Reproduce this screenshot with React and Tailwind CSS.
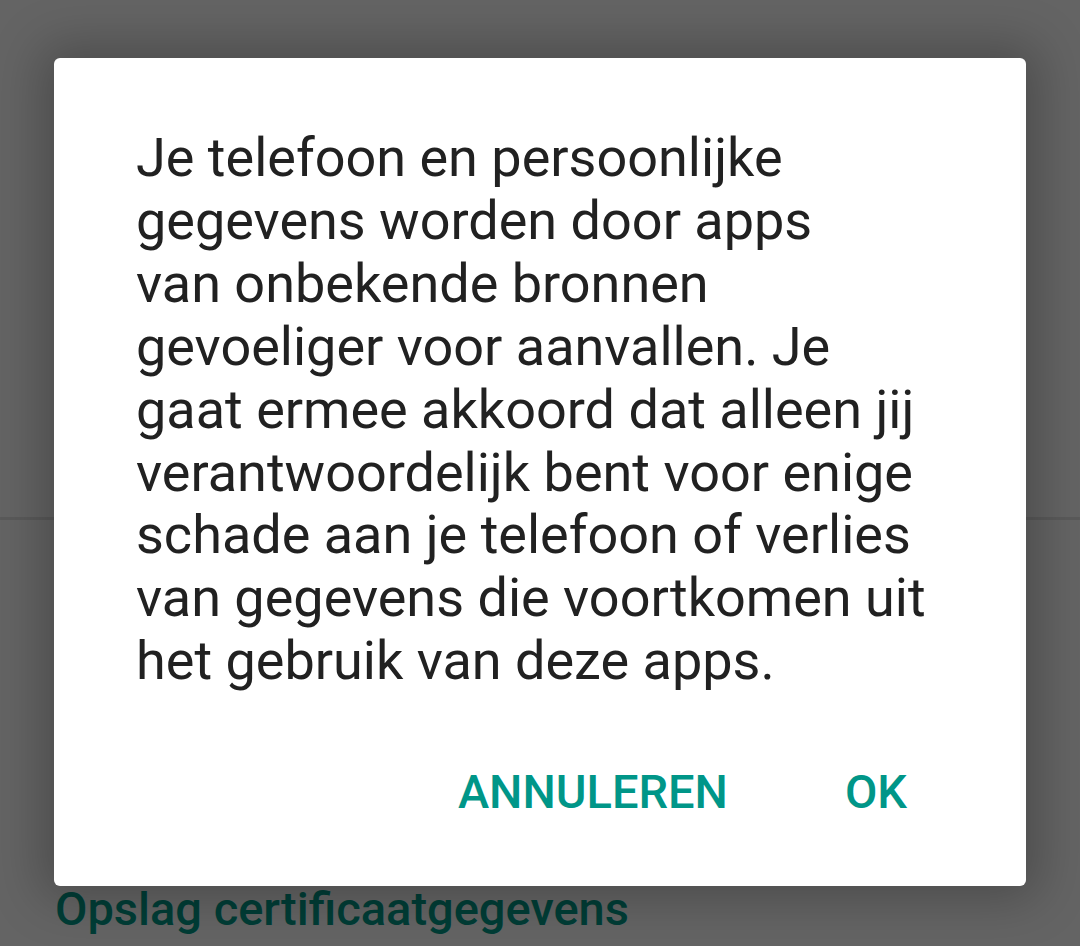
import React from "react";

const lines = [
  "Je telefoon en persoonlijke",
  "gegevens worden door apps",
  "van onbekende bronnen",
  "gevoeliger voor aanvallen. Je",
  "gaat ermee akkoord dat alleen jij",
  "verantwoordelijk bent voor enige",
  "schade aan je telefoon of verlies",
  "van gegevens die voortkomen uit",
  "het gebruik van deze apps.",
];

const App = () => {
  return (
    <div
      className="relative w-[1080px] h-[946px] overflow-hidden bg-[#646464]"
      style={{ fontFamily: "Roboto, 'Noto Sans', sans-serif" }}
    >
      {/* settings screen behind the scrim */}
      <div className="flex flex-col h-full">
        <div className="h-[517px]" />
        <div className="h-[3px] bg-[#5a5a5a]" />
        <div className="flex-1 flex flex-col justify-end pl-[55px] pb-[9px]">
          <p className="text-[47px] font-medium leading-[56px] text-[#003d36]">
            Opslag certificaatgegevens
          </p>
        </div>
      </div>

      {/* dialog */}
      <div className="absolute left-[54px] top-[58px] w-[972px] h-[828px] bg-white rounded-[6px] shadow-[0_0_50px_12px_rgba(0,0,0,0.25)] flex flex-col">
        <div className="pl-[82px] pr-[60px] pt-[69px] text-[#212121] text-[54px] leading-[62.9px]">
          {lines.map((l) => (
            <p key={l} className="whitespace-nowrap">{l}</p>
          ))}
        </div>
        <div className="flex justify-end items-center gap-[117px] pr-[119px] mt-[64px] text-[#009688] text-[47px] font-medium">
          <span>ANNULEREN</span>
          <span>OK</span>
        </div>
      </div>
    </div>
  );
};

export default App;
